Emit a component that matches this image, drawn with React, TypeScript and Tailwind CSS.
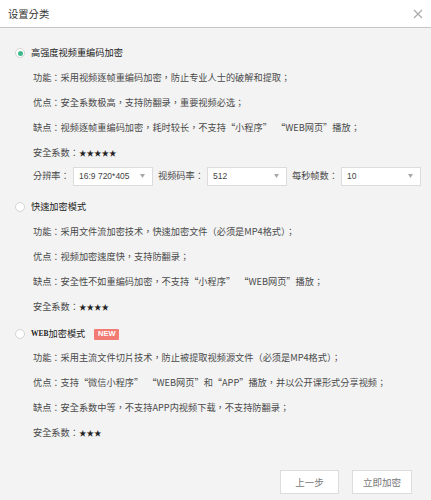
import React from "react";

const font = { fontFamily: '"Noto Sans CJK TC", "Noto Sans CJK SC", "Noto Sans", sans-serif' };

function Radio({ checked }: { checked?: boolean }) {
  return (
    <span className="w-[10px] h-[10px] rounded-full border border-[#d4d4d4] bg-white flex items-center justify-center shrink-0">
      {checked && <span className="w-[5px] h-[5px] rounded-full bg-[#3dba8c]" />}
    </span>
  );
}

function Line({ children }: { children: React.ReactNode }) {
  return (
    <div className="h-[25px] flex items-center pl-[33px] text-[9.2px] text-[#4a4a4a] whitespace-nowrap">
      {children}
    </div>
  );
}

function Select({ value }: { value: string }) {
  return (
    <div className="w-[80px] h-[19px] bg-white border border-[#dcdcdc] flex items-center justify-between pl-[5px] pr-[7px]">
      <span className="text-[8.5px] text-[#444]" style={{ fontFamily: '"Liberation Sans", Arial, sans-serif' }}>
        {value}
      </span>
      <svg width="5" height="4" viewBox="0 0 5 4">
        <path d="M0 0 L5 0 L2.5 4 Z" fill="#a8a8a8" />
      </svg>
    </div>
  );
}

export default function App() {
  return (
    <div className="w-[431px] h-[500px] bg-[#f3f3f3] flex flex-col" style={font}>
      <div className="h-[28px] bg-white border-b border-[#c4c4c4] flex items-center justify-between pl-[8px] pr-[8px] shrink-0">
        <span className="text-[10.3px] text-[#333]">设置分类</span>
        <svg width="10" height="10" viewBox="0 0 10 10">
          <path d="M1 1 L9 9 M9 1 L1 9" stroke="#a8a8a8" strokeWidth="1.1" />
        </svg>
      </div>

      <div className="flex flex-col pt-[13px]">
        <div className="h-[24px] flex items-center pl-[15px] gap-[6px]">
          <Radio checked />
          <span className="text-[9.2px] text-[#222]">高强度视频重编码加密</span>
        </div>
        <Line>功能：采用视频逐帧重编码加密，防止专业人士的破解和提取；</Line>
        <Line>优点：安全系数极高，支持防翻录，重要视频必选；</Line>
        <Line>缺点：视频逐帧重编码加密，耗时较长，不支持“小程序”&nbsp;&nbsp;“WEB网页”播放；</Line>
        <Line>
          安全系数：<span className="text-[#222] text-[7.5px]">★★★★★</span>
        </Line>
        <div className="h-[22px] flex items-center pl-[33px] text-[9.2px] text-[#4a4a4a] whitespace-nowrap">
          <span className="w-[40px]">分辨率：</span>
          <Select value="16:9 720*405" />
          <span className="w-[54px] pl-[5px]">视频码率：</span>
          <Select value="512" />
          <span className="w-[54px] pl-[5px]">每秒帧数：</span>
          <Select value="10" />
        </div>

        <div className="h-[24px] mt-[8px] flex items-center pl-[15px] gap-[6px]">
          <Radio />
          <span className="text-[9.2px] text-[#222]">快速加密模式</span>
        </div>
        <Line>功能：采用文件流加密技术，快速加密文件（必须是MP4格式）；</Line>
        <Line>优点：视频加密速度快，支持防翻录；</Line>
        <Line>缺点：安全性不如重编码加密，不支持“小程序”&nbsp;&nbsp;“WEB网页”播放；</Line>
        <Line>
          安全系数：<span className="text-[#222] text-[7.5px]">★★★★</span>
        </Line>

        <div className="h-[22px] mt-[4px] flex items-center pl-[15px] gap-[6px]">
          <Radio />
          <span className="text-[9.2px] text-[#222] flex items-center">
            <span className="text-[7.5px] font-bold" style={{ fontFamily: '"Liberation Serif", serif' }}>WEB</span>
            加密模式
          </span>
          <span className="ml-[3px] h-[11px] w-[25px] bg-[#f27b73] text-white text-[7.5px] font-bold flex items-center justify-center rounded-[1px]" style={{ fontFamily: '"Liberation Sans", sans-serif' }}>
            NEW
          </span>
        </div>
        <Line>功能：采用主流文件切片技术，防止被提取视频源文件（必须是MP4格式）；</Line>
        <Line>优点：支持“微信小程序”&nbsp;&nbsp;“WEB网页”和“APP”播放，并以公开课形式分享视频；</Line>
        <Line>缺点：安全系数中等，不支持APP内视频下载，不支持防翻录；</Line>
        <Line>
          安全系数：<span className="text-[#222] text-[7.5px]">★★★</span>
        </Line>

        <div className="mt-[25px] flex justify-end gap-[13px] pr-[19px]">
          <button className="w-[59px] h-[24px] bg-white border border-[#dcdcdc] text-[9.5px] text-[#777]">上一步</button>
          <button className="w-[60px] h-[24px] bg-white border border-[#dcdcdc] text-[9.5px] text-[#777]">立即加密</button>
        </div>
      </div>
    </div>
  );
}
